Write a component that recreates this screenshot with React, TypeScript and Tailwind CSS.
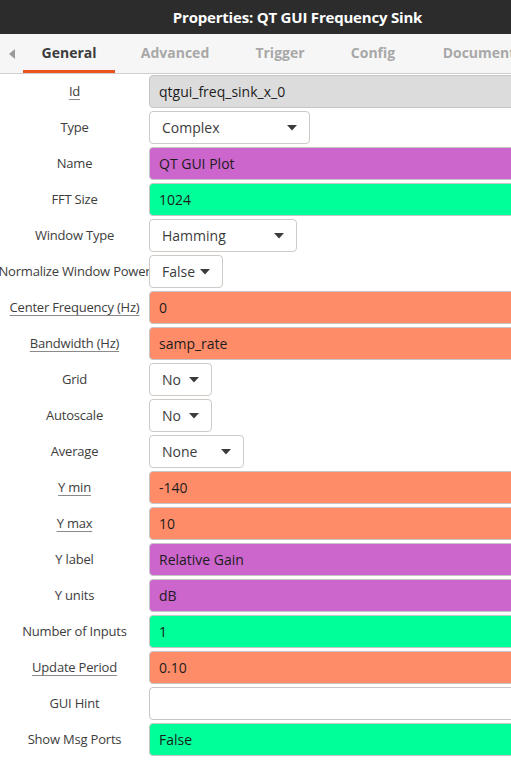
import React from 'react';

type Row = {
  label: string;
  value: string;
  kind: 'id' | 'text' | 'select';
  color?: string;
  width?: string;
  underline?: boolean;
};

const rows: Row[] = [
  { label: 'Id', value: 'qtgui_freq_sink_x_0', kind: 'id', underline: true },
  { label: 'Type', value: 'Complex', kind: 'select', width: 'w-[161px]' },
  { label: 'Name', value: 'QT GUI Plot', kind: 'text', color: 'bg-[#cc66cc]' },
  { label: 'FFT Size', value: '1024', kind: 'text', color: 'bg-[#00ff99]' },
  { label: 'Window Type', value: 'Hamming', kind: 'select', width: 'w-[148px]' },
  { label: 'Normalize Window Power', value: 'False', kind: 'select', width: 'w-[74px]' },
  { label: 'Center Frequency (Hz)', value: '0', kind: 'text', color: 'bg-[#ff8c69]', underline: true },
  { label: 'Bandwidth (Hz)', value: 'samp_rate', kind: 'text', color: 'bg-[#ff8c69]', underline: true },
  { label: 'Grid', value: 'No', kind: 'select', width: 'w-[63px]' },
  { label: 'Autoscale', value: 'No', kind: 'select', width: 'w-[63px]' },
  { label: 'Average', value: 'None', kind: 'select', width: 'w-[95px]' },
  { label: 'Y min', value: '-140', kind: 'text', color: 'bg-[#ff8c69]', underline: true },
  { label: 'Y max', value: '10', kind: 'text', color: 'bg-[#ff8c69]', underline: true },
  { label: 'Y label', value: 'Relative Gain', kind: 'text', color: 'bg-[#cc66cc]' },
  { label: 'Y units', value: 'dB', kind: 'text', color: 'bg-[#cc66cc]' },
  { label: 'Number of Inputs', value: '1', kind: 'text', color: 'bg-[#00ff99]' },
  { label: 'Update Period', value: '0.10', kind: 'text', color: 'bg-[#ff8c69]', underline: true },
  { label: 'GUI Hint', value: '', kind: 'text', color: 'bg-white' },
  { label: 'Show Msg Ports', value: 'False', kind: 'text', color: 'bg-[#00ff99]' },
];

const tabs = [
  { name: 'General', w: 'w-[92px]', active: true },
  { name: 'Advanced', w: 'w-[120px]' },
  { name: 'Trigger', w: 'w-[90px]' },
  { name: 'Config', w: 'w-[96px]' },
  { name: 'Document', w: 'w-[116px]' },
];

function Caret() {
  return (
    <svg width="10" height="6" viewBox="0 0 10 6" className="shrink-0">
      <path d="M0 0 L10 0 L5 5.5 Z" fill="#3c3c3c" />
    </svg>
  );
}

function Field({ row }: { row: Row }) {
  if (row.kind === 'select') {
    return (
      <div
        className={`${row.width} h-[33px] flex items-center justify-between pl-[12px] pr-[12px] bg-white border border-[#cfcac5] rounded-[4px] text-[14px] text-[#3c3c3c]`}
      >
        <span>{row.value}</span>
        <Caret />
      </div>
    );
  }
  const bg = row.kind === 'id' ? 'bg-[#dcdcdc]' : row.color;
  return (
    <div
      className={`w-[calc(100%+8px)] h-[33px] flex items-center pl-[9px] border border-[#c6c6c6] rounded-[4px] text-[14px] text-[#1c1c1c] ${bg}`}
    >
      {row.value}
    </div>
  );
}

export default function App() {
  return (
    <div
      className="w-[511px] h-[772px] bg-white overflow-hidden"
      style={{ fontFamily: '"Open Sans", "Noto Sans", sans-serif' }}
    >
      {/* title bar */}
      <div className="h-[34px] bg-[#2c2c2c] flex items-center justify-center pl-[84px]">
        <span className="text-white font-bold text-[15px] tracking-[-0.2px] whitespace-nowrap">
          Properties: QT GUI Frequency Sink
        </span>
      </div>

      {/* tabs */}
      <div className="h-[40px] bg-[#f6f6f6] border-b border-[#cfcfcf] flex items-stretch whitespace-nowrap overflow-hidden">
        <div className="w-[23px] shrink-0 flex items-center justify-center">
          <svg width="6" height="10" viewBox="0 0 6 10">
            <path d="M6 0 L6 10 L0 5 Z" fill="#9a9a9a" />
          </svg>
        </div>
        {tabs.map((t) => (
          <div
            key={t.name}
            className={`${t.w} shrink-0 flex items-center justify-center text-[14px] font-bold border-b-[3px] ${
              t.active ? 'text-[#3c3c3c] border-[#e95420]' : 'text-[#a8a8a8] border-transparent'
            }`}
          >
            {t.name}
          </div>
        ))}
      </div>

      {/* property rows */}
      <div className="pt-[1px] overflow-hidden">
        {rows.map((r) => (
          <div key={r.label} className="h-[36px] flex items-start">
            <div className="w-[149px] h-[33px] shrink-0 flex items-center justify-center text-[13px] text-[#3d3d3d] whitespace-nowrap tracking-[-0.2px]">
              <span className={r.underline ? 'underline underline-offset-[3px] decoration-[#8a8a8a]' : ''}>
                {r.label}
              </span>
            </div>
            <div className="flex-1 min-w-0">
              <Field row={r} />
            </div>
          </div>
        ))}
      </div>
    </div>
  );
}
